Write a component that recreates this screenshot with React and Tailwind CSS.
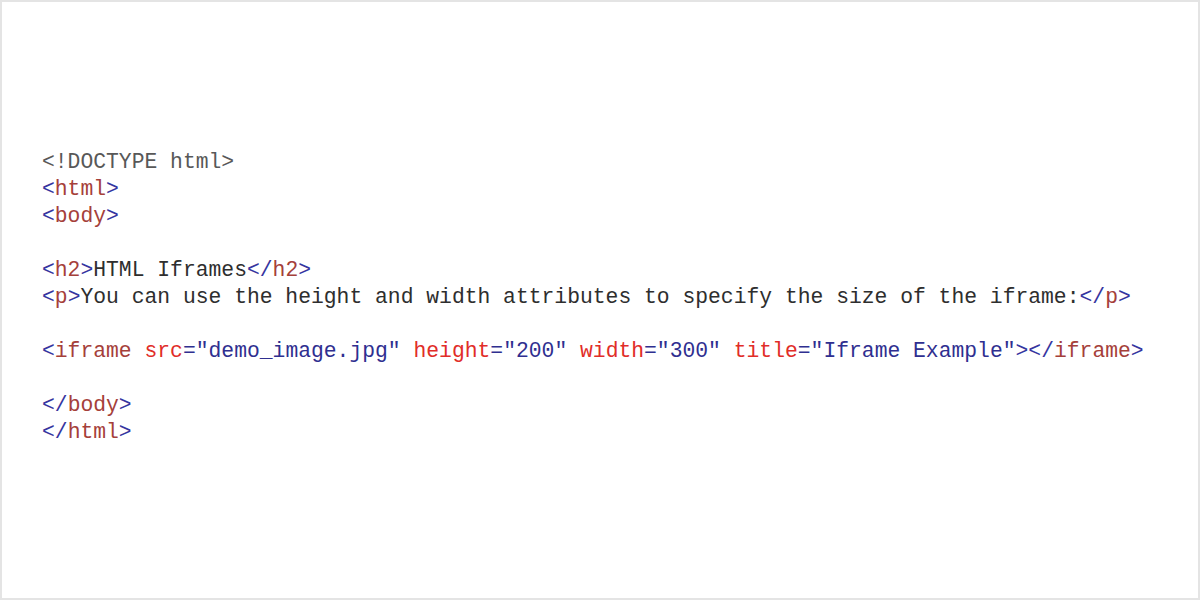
import React from "react";

const B = ({ children }) => <span className="text-[#3535a0]">{children}</span>;
const T = ({ children }) => <span className="text-[#a5403a]">{children}</span>;
const A = ({ children }) => <span className="text-[#e12d28]">{children}</span>;
const V = ({ children }) => <span className="text-[#2f2f90]">{children}</span>;

const Open = ({ name }) => (
  <>
    <B>&lt;</B>
    <T>{name}</T>
    <B>&gt;</B>
  </>
);

const Close = ({ name }) => (
  <>
    <B>&lt;/</B>
    <T>{name}</T>
    <B>&gt;</B>
  </>
);

const App = () => {
  return (
    <div className="w-[1200px] h-[600px] bg-white border-2 border-[#e4e4e4] overflow-hidden">
      <div
        className="pl-[40px] pt-[147px] text-[21.35px] leading-[27px] text-[#2e2e2e] whitespace-pre"
        style={{ fontFamily: '"Liberation Mono", "DejaVu Sans Mono", monospace' }}
      >
        <div className="text-[#585858]">&lt;!DOCTYPE html&gt;</div>
        <div>
          <Open name="html" />
        </div>
        <div>
          <Open name="body" />
        </div>
        <div>&nbsp;</div>
        <div>
          <Open name="h2" />
          HTML Iframes
          <Close name="h2" />
        </div>
        <div>
          <Open name="p" />
          You can use the height and width attributes to specify the size of the iframe:
          <Close name="p" />
        </div>
        <div>&nbsp;</div>
        <div>
          <B>&lt;</B>
          <T>iframe</T> <A>src</A>
          <V>="demo_image.jpg"</V> <A>height</A>
          <V>="200"</V> <A>width</A>
          <V>="300"</V> <A>title</A>
          <V>="Iframe Example"</V>
          <B>&gt;&lt;/</B>
          <T>iframe</T>
          <B>&gt;</B>
        </div>
        <div>&nbsp;</div>
        <div>
          <Close name="body" />
        </div>
        <div>
          <Close name="html" />
        </div>
      </div>
    </div>
  );
};

export default App;
